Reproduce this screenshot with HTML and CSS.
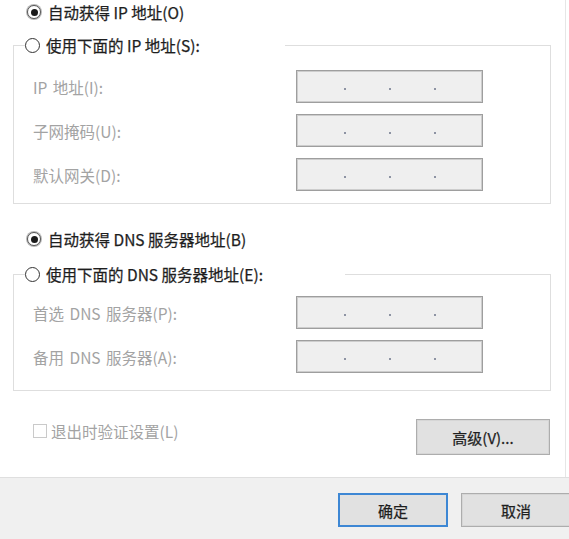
FILE: index.html
```html
<!DOCTYPE html>
<html lang="zh-CN">
<head>
<meta charset="utf-8">
<title>IPv4 属性</title>
<link rel="stylesheet" href="styles.css">
</head>
<body>
<div class="dialog">
  <main class="panel">
    <div class="radio-row">
      <span class="radio checked"></span>
      <span class="label">自动获得 IP 地址(O)</span>
    </div>
    <fieldset class="group group-ip">
      <legend class="legend legend-ip">
        <span class="radio"></span>
        <span class="label">使用下面的 IP 地址(S):</span>
      </legend>
      <div class="grid grid-ip">
        <span class="field-label">IP 地址(I):</span>
        <div class="ip-box"><span class="dot"></span><span class="dot"></span><span class="dot"></span></div>
        <span class="field-label">子网掩码(U):</span>
        <div class="ip-box"><span class="dot"></span><span class="dot"></span><span class="dot"></span></div>
        <span class="field-label">默认网关(D):</span>
        <div class="ip-box"><span class="dot"></span><span class="dot"></span><span class="dot"></span></div>
      </div>
    </fieldset>

    <div class="radio-row radio-dns">
      <span class="radio checked"></span>
      <span class="label">自动获得 DNS 服务器地址(B)</span>
    </div>
    <fieldset class="group group-dns">
      <legend class="legend legend-dns">
        <span class="radio"></span>
        <span class="label">使用下面的 DNS 服务器地址(E):</span>
      </legend>
      <div class="grid grid-dns">
        <span class="field-label">首选 DNS 服务器(P):</span>
        <div class="ip-box"><span class="dot"></span><span class="dot"></span><span class="dot"></span></div>
        <span class="field-label">备用 DNS 服务器(A):</span>
        <div class="ip-box"><span class="dot"></span><span class="dot"></span><span class="dot"></span></div>
      </div>
    </fieldset>

    <div class="options-row">
      <div class="check-wrap">
        <span class="checkbox"></span>
        <span class="check-label">退出时验证设置(L)</span>
      </div>
      <button class="btn btn-adv">高级(V)...</button>
    </div>
  </main>
  <footer class="footer">
    <button class="btn btn-ok">确定</button>
    <button class="btn btn-cancel">取消</button>
  </footer>
</div>
</body>
</html>
```
FILE: styles.css
```css
html, body {
  margin: 0;
  padding: 0;
  background: #ffffff;
}
body {
  width: 569px;
  height: 539px;
  overflow: hidden;
  font-family: "Noto Sans CJK SC", "Microsoft YaHei", sans-serif;
  font-size: 15.5px;
  color: #1e1e1e;
}
.dialog {
  display: flex;
  flex-direction: column;
  height: 539px;
}
.panel {
  flex: 1;
  width: 552px;
  padding: 2px 0 0 13px;
  border-right: 1px solid #e6e6e6;
  box-sizing: content-box;
  display: flex;
  flex-direction: column;
}
.radio-row {
  display: flex;
  align-items: center;
  height: 20px;
  margin-left: 14px;
}
.radio-dns {
  margin-top: 25px;
}
.radio {
  width: 13px;
  height: 13px;
  border: 1px solid #333333;
  border-radius: 50%;
  box-sizing: border-box;
  display: inline-flex;
  align-items: center;
  justify-content: center;
  flex: none;
  background: #ffffff;
}
.radio.checked {
  width: 14px;
  height: 14px;
  border-color: #555555;
  box-shadow: 0 0 0 1px #b8b8b8;
}
.radio.checked::after {
  content: "";
  width: 7px;
  height: 7px;
  border-radius: 50%;
  background: #1a1a1a;
}
.label {
  margin-left: 7px;
  line-height: 20px;
  white-space: nowrap;
  -webkit-text-stroke: 0.25px #1e1e1e;
}
.group {
  margin: 13px 0 0 0;
  padding: 0;
  width: 538px;
  box-sizing: border-box;
  border: 1px solid #dedede;
  min-width: 0;
}
.group-dns {
  margin-top: 15px;
}
.legend {
  display: flex;
  align-items: center;
  height: 20px;
  padding: 0;
  margin-left: 11px;
  box-sizing: border-box;
}
.legend .radio {
  width: 15px;
  height: 15px;
}
.legend .label {
  margin-left: 6px;
}
.legend-ip {
  width: 260px;
}
.legend-dns {
  width: 320px;
}
.grid {
  display: grid;
  grid-template-columns: 263px 187px;
  row-gap: 11px;
  align-items: center;
  padding: 15px 0 12px 19px;
}
.grid-dns {
  padding: 12px 0 17px 19px;
}
.field-label {
  color: #a3a3a3;
  font-size: 15.5px;
  word-spacing: 2px;
  white-space: nowrap;
}
.ip-box {
  height: 33px;
  box-sizing: border-box;
  background: #efefef;
  border: 1px solid #9e9e9e;
  box-shadow: inset 0 0 0 1px #cdcdcd;
  display: flex;
  justify-content: center;
  align-items: center;
  gap: 43px;
}
.dot {
  width: 2px;
  height: 2px;
  margin-top: 5px;
  background: #8d93a3;
}
.options-row {
  margin-top: 28px;
  display: flex;
  align-items: center;
  justify-content: space-between;
  width: 537px;
  height: 36px;
}
.check-wrap {
  display: flex;
  align-items: center;
  margin-left: 20px;
  margin-top: -12px;
}
.checkbox {
  width: 14px;
  height: 14px;
  box-sizing: border-box;
  border: 1px solid #cacaca;
  background: #ffffff;
}
.check-label {
  margin-left: 4px;
  color: #a3a3a3;
  white-space: nowrap;
}
.btn {
  font-family: inherit;
  font-size: 15px;
  color: #1e1e1e;
  -webkit-text-stroke: 0.25px #1e1e1e;
  background: #e1e1e1;
  border: 1px solid #adadad;
  box-shadow: inset 0 0 0 1px #d6d6d6;
  padding: 0;
  margin: 0;
}
.btn-adv {
  width: 134px;
  height: 36px;
}
.footer {
  height: 62px;
  box-sizing: border-box;
  background: #f0f0f0;
  border-top: 1px solid #dfdfdf;
  display: flex;
  align-items: flex-start;
  gap: 13px;
  padding: 15px 0 0 338px;
}
.btn-ok, .btn-cancel {
  width: 110px;
  height: 34px;
  flex: none;
}
.btn-ok {
  border: 2px solid #3d87d4;
  box-shadow: none;
}
```
